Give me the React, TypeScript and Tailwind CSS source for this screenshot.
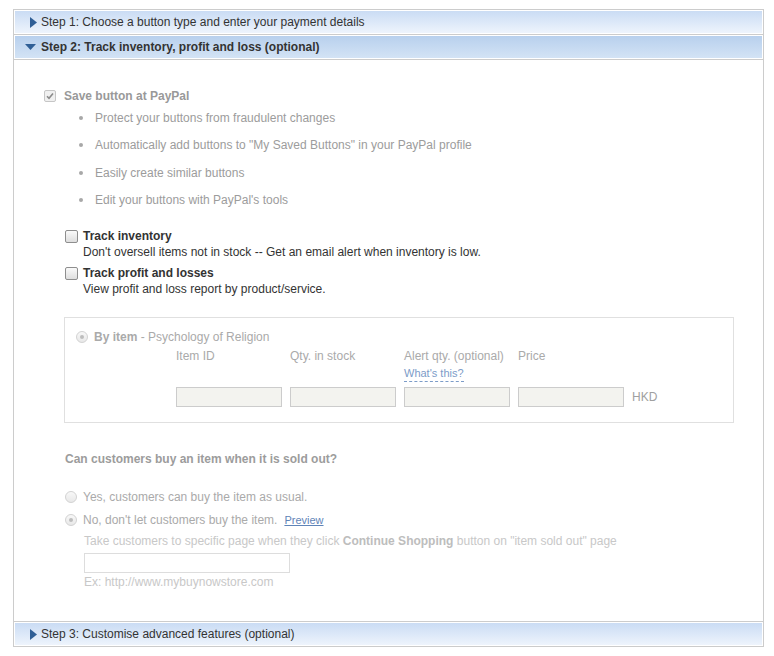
import React from "react";

function RightTri() {
  return (
    <svg width="7" height="11" viewBox="0 0 7 11" className="block">
      <path d="M0 0 L7 5.5 L0 11 Z" fill="#2f5f96" />
    </svg>
  );
}
function DownTri() {
  return (
    <svg width="11" height="6" viewBox="0 0 11 6" className="block">
      <path d="M0 0 L11 0 L5.5 6 Z" fill="#2f5f96" />
    </svg>
  );
}

function Header({ children, open, bold }: { children: React.ReactNode; open?: boolean; bold?: boolean }) {
  return (
    <div
      className={
        "h-[24px] border border-white flex items-center " +
        (open
          ? "bg-gradient-to-b from-[#b8d0ed] to-[#d3e3f5]"
          : "bg-gradient-to-b from-[#cadcf4] to-[#eef4fc]")
      }
    >
      <div className={open ? "w-[26px] pl-[10px] flex items-center" : "w-[26px] pl-[15px] flex items-center"}>
        {open ? <DownTri /> : <RightTri />}
      </div>
      <span className={"text-[12px] text-[#333] " + (bold ? "font-bold" : "")}>{children}</span>
    </div>
  );
}

function CheckedDisabled() {
  return (
    <div className="w-[12px] h-[12px] rounded-[2px] border border-[#c6c6c6] bg-[#f0f0f0] flex items-center justify-center">
      <svg width="8" height="8" viewBox="0 0 8 8">
        <path d="M1 4.2 L3 6.2 L7 1.5" fill="none" stroke="#8a8a8a" strokeWidth="1.6" />
      </svg>
    </div>
  );
}

function Unchecked() {
  return (
    <div className="w-[13px] h-[13px] rounded-[2px] border border-[#8e8e8e] bg-gradient-to-b from-[#fafafa] to-[#dedede]" />
  );
}

function Radio({ checked }: { checked?: boolean }) {
  return (
    <div className="w-[12px] h-[12px] rounded-full border border-[#d2d2d2] bg-gradient-to-b from-[#f8f8f8] to-[#e8e8e8] flex items-center justify-center">
      {checked && <div className="w-[4px] h-[4px] rounded-full bg-[#bdbdbd]" />}
    </div>
  );
}

function Bullet({ children }: { children: React.ReactNode }) {
  return (
    <li className="flex items-center h-[14px] leading-[14px]">
      <span className="w-[4px] h-[4px] rounded-full bg-[#a8a8a8] ml-[65px] mr-[12px]" />
      <span>{children}</span>
    </li>
  );
}

export default function App() {
  return (
    <div className="pt-[9px] pl-[13px] font-['Liberation_Sans',Arial,sans-serif] text-[12px]">
      <div className="w-[751px] border border-[#cccccc] bg-white">
        <Header>Step 1: Choose a button type and enter your payment details</Header>
        <div className="h-px bg-[#cccccc]" />
        <Header open bold>
          Step 2: Track inventory, profit and loss (optional)
        </Header>
        <div className="h-px bg-[#cccccc]" />

        <div className="pt-[29px] pb-[32px]">
          {/* Save button */}
          <div className="flex items-center h-[14px] pl-[30px]">
            <CheckedDisabled />
            <span className="ml-[8px] font-bold text-[#999]">Save button at PayPal</span>
          </div>
          <ul className="mt-[8px] flex flex-col gap-[13.4px] text-[#9c9c9c]">
            <Bullet>Protect your buttons from fraudulent changes</Bullet>
            <Bullet>Automatically add buttons to "My Saved Buttons" in your PayPal profile</Bullet>
            <Bullet>Easily create similar buttons</Bullet>
            <Bullet>Edit your buttons with PayPal's tools</Bullet>
          </ul>

          {/* Track inventory */}
          <div className="mt-[21px] pl-[51px] leading-[16px]">
            <div className="flex items-center h-[16px]">
              <Unchecked />
              <span className="ml-[5px] font-bold text-[#333]">Track inventory</span>
            </div>
            <div className="pl-[18px] text-[#333]">
              Don't oversell items not in stock -- Get an email alert when inventory is low.
            </div>
            <div className="flex items-center h-[16px] mt-[5px]">
              <Unchecked />
              <span className="ml-[5px] font-bold text-[#333]">Track profit and losses</span>
            </div>
            <div className="pl-[18px] text-[#333]">View profit and loss report by product/service.</div>
          </div>

          {/* By item box */}
          <div className="ml-[50px] mt-[20px] w-[670px] border border-[#e0e0e0] pt-[12px] pb-[15px]">
            <div className="flex items-center h-[14px] pl-[11px]">
              <Radio checked />
              <span className="ml-[6px] font-bold text-[#aaa]">By item</span>
              <span className="text-[#aaa]">&nbsp;- Psychology of Religion</span>
            </div>
            <div className="ml-[111px] mt-[5px] grid grid-cols-[106px_106px_106px_106px_auto] gap-x-[8px] text-[#aaa]">
              <div className="h-[14px] leading-[14px]">Item ID</div>
              <div className="h-[14px] leading-[14px]">Qty. in stock</div>
              <div className="h-[14px] leading-[14px] whitespace-nowrap">Alert qty. (optional)</div>
              <div className="h-[14px] leading-[14px]">Price</div>
              <div />
              <div />
              <div />
              <div className="mt-[1px]">
                <span className="text-[11px] leading-[13px] text-[#7c9cc8] border-b border-dashed border-[#7c9cc8] pb-[1px] inline-block">
                  What's this?
                </span>
              </div>
              <div />
              <div />
              <div className="mt-[5px] h-[20px] border border-[#cccccc] bg-[#f3f3ef]" />
              <div className="mt-[5px] h-[20px] border border-[#cccccc] bg-[#f3f3ef]" />
              <div className="mt-[5px] h-[20px] border border-[#cccccc] bg-[#f3f3ef]" />
              <div className="mt-[5px] h-[20px] border border-[#cccccc] bg-[#f3f3ef]" />
              <div className="mt-[5px] h-[20px] flex items-center text-[#a0a0a0]">HKD</div>
            </div>
          </div>

          {/* Sold out */}
          <div className="mt-[29px] pl-[51px] h-[14px] leading-[14px] font-bold text-[#9c9c9c]">
            Can customers buy an item when it is sold out?
          </div>
          <div className="mt-[24px] pl-[51px] flex items-center h-[14px] text-[#aaa]">
            <Radio />
            <span className="ml-[6px]">Yes, customers can buy the item as usual.</span>
          </div>
          <div className="mt-[9px] pl-[51px] flex items-center h-[14px] text-[#aaa]">
            <Radio checked />
            <span className="ml-[6px]">No, don't let customers buy the item.</span>
            <span className="ml-[7px] text-[11px] text-[#5f84b8] underline">Preview</span>
          </div>
          <div className="mt-[7px] pl-[70px] h-[14px] leading-[14px] text-[#c8c8c8]">
            Take customers to specific page when they click{" "}
            <span className="font-bold text-[#bdbdbd]">Continue Shopping</span> button on "item sold out" page
          </div>
          <div className="ml-[70px] mt-[5px] w-[206px] h-[20px] border border-[#dddddd] bg-white" />
          <div className="mt-[2px] pl-[70px] h-[14px] leading-[14px] text-[#c8c8c8]">
            Ex: http://www.mybuynowstore.com
          </div>
        </div>

        <div className="h-px bg-[#cccccc]" />
        <Header>Step 3: Customise advanced features (optional)</Header>
      </div>
    </div>
  );
}
